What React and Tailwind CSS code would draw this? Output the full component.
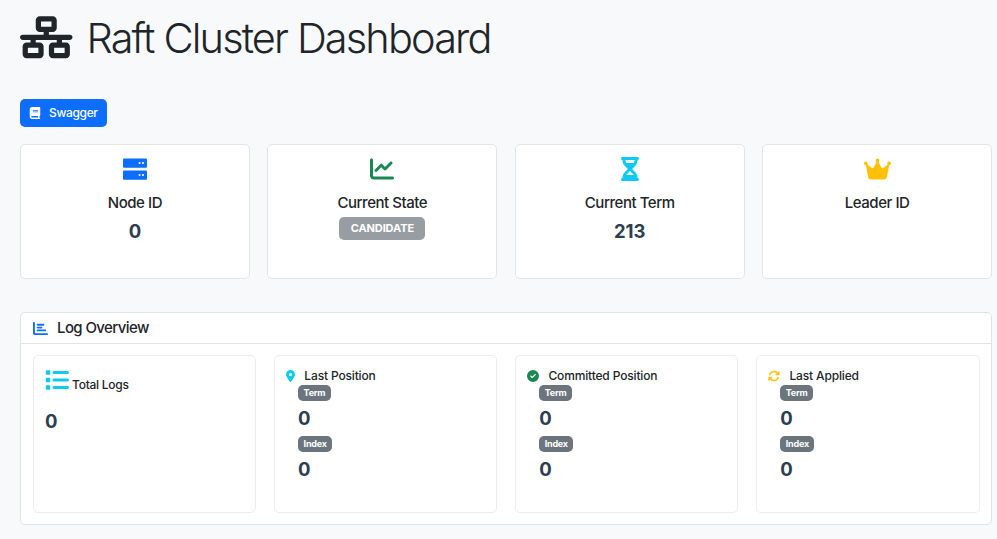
import {
  FaNetworkWired,
  FaBook,
  FaChartLine,
  FaHourglassHalf,
  FaCrown,
  FaChartBar,
  FaList,
  FaLocationDot,
  FaCircleCheck,
  FaArrowsRotate,
} from "react-icons/fa6";

function ServerIcon() {
  return (
    <svg viewBox="0 0 24 24" className="h-6 w-6 text-[#0d6efd]">
      <rect x="0" y="1.4" width="24" height="9.3" rx="1" fill="currentColor" />
      <rect x="0" y="13.4" width="24" height="9.3" rx="1" fill="currentColor" />
      <g fill="#fff">
        <circle cx="16.6" cy="6" r="1.05" />
        <circle cx="20" cy="6" r="1.05" />
        <circle cx="16.6" cy="18" r="1.05" />
        <circle cx="20" cy="18" r="1.05" />
      </g>
    </svg>
  );
}

function StatCard({ icon, title, children }) {
  return (
    <div className="flex h-[135px] flex-1 flex-col items-center rounded-[5px] border border-[#e3e5e7] bg-white pt-[12px]">
      {icon}
      <h5 className="mt-[12px] text-[15px] leading-[20px] font-medium tracking-[-0.45px]">{title}</h5>
      {children}
    </div>
  );
}

function Value({ children }) {
  return <p className="text-[18.5px] leading-[22px] font-bold text-[#2c3e50]">{children}</p>;
}

function Badge({ children }) {
  return (
    <span className="flex h-[15.5px] w-fit items-center rounded-[5px] bg-[#6c757d] px-[5.5px] text-[9px] font-bold tracking-[-0.2px] text-white">
      {children}
    </span>
  );
}

function PositionCard({ icon, title }) {
  return (
    <div className="h-[158px] flex-1 rounded-[5px] border border-[#eceded] bg-white pt-[11px] pl-[11px]">
      <div className="flex h-[18px] items-center gap-[9.25px]">
        {icon}
        <h6 className="text-[12px] leading-[18px] font-medium tracking-[-0.15px]">{title}</h6>
      </div>
      <div className="flex flex-col pl-[12px]">
        <Badge>Term</Badge>
        <div className="mt-[6px] mb-[7.5px]">
          <Value>0</Value>
        </div>
        <Badge>Index</Badge>
        <div className="mt-[6px]">
          <Value>0</Value>
        </div>
      </div>
    </div>
  );
}

export default function App() {
  return (
    <div className="h-[539px] w-[997px] overflow-hidden bg-[#f8f9fa] pl-[20px] pr-[5px] font-[Inter,sans-serif] text-[#212529]">
      <header className="flex h-[98.5px] items-start pt-[13px]">
        <FaNetworkWired className="mt-[3px] h-[52.5px] w-[52.5px] -translate-y-[5px]" />
        <h1 className="ml-[14px] text-[41.5px] leading-[50px] font-[340] tracking-[-1.87px] whitespace-nowrap">
          Raft Cluster Dashboard
        </h1>
      </header>

      <button className="flex h-[28px] w-[87px] items-center rounded-[5px] bg-[#0d6efd] pl-[9px] text-[12px] text-white">
        <FaBook className="h-[12px] w-[12px]" />
        <span className="ml-[8px] pt-px font-[450] tracking-[-0.35px]">Swagger</span>
      </button>

      <section className="mt-[17.5px] flex gap-[17.6px]">
        <StatCard title="Node ID" icon={<ServerIcon />}>
          <div className="mt-[7px]">
            <Value>0</Value>
          </div>
        </StatCard>
        <StatCard title="Current State" icon={<FaChartLine className="h-6 w-6 text-[#198754]" />}>
          <span className="mt-[4px] flex h-[23px] w-[86px] items-center justify-center rounded-[5px] bg-[#989da3] text-[11px] font-bold tracking-[-0.1px] text-white">
            CANDIDATE
          </span>
        </StatCard>
        <StatCard title="Current Term" icon={<FaHourglassHalf className="h-6 w-[18px] text-[#0dcaf0]" />}>
          <div className="mt-[7px]">
            <Value>213</Value>
          </div>
        </StatCard>
        <StatCard title="Leader ID" icon={<FaCrown className="h-6 w-[27px] text-[#ffc107]" />} />
      </section>

      <section className="mt-[33px] h-[213px] rounded-[5px] border border-[#e1e3e5] bg-white">
        <div className="flex h-[31px] items-center border-b border-[#e1e3e5] pl-[11.5px]">
          <FaChartBar className="h-[15px] w-[15px] text-[#0d6efd]" />
          <h5 className="ml-[9.5px] pt-px text-[15px] font-medium tracking-[-0.6px]">Log Overview</h5>
        </div>
        <div className="flex gap-[17.8px] px-[11.5px] pt-[11px]">
          <div className="h-[158px] flex-1 rounded-[5px] border border-[#eceded] bg-white pt-[12px] pl-[11.5px]">
            <div className="flex">
              <FaList className="h-6 w-6 text-[#0dcaf0]" />
              <h6 className="mt-[8px] ml-[3px] text-[12px] leading-[18px] font-medium tracking-[-0.25px]">Total Logs</h6>
            </div>
            <div className="mt-[16px]">
              <Value>0</Value>
            </div>
          </div>
          <PositionCard title="Last Position" icon={<FaLocationDot className="h-[12px] w-[9px] text-[#0dcaf0]" />} />
          <PositionCard title="Committed Position" icon={<FaCircleCheck className="h-[12px] w-[12px] text-[#198754]" />} />
          <PositionCard title="Last Applied" icon={<FaArrowsRotate className="h-[12px] w-[12px] text-[#ffc107]" />} />
        </div>
      </section>
    </div>
  );
}
